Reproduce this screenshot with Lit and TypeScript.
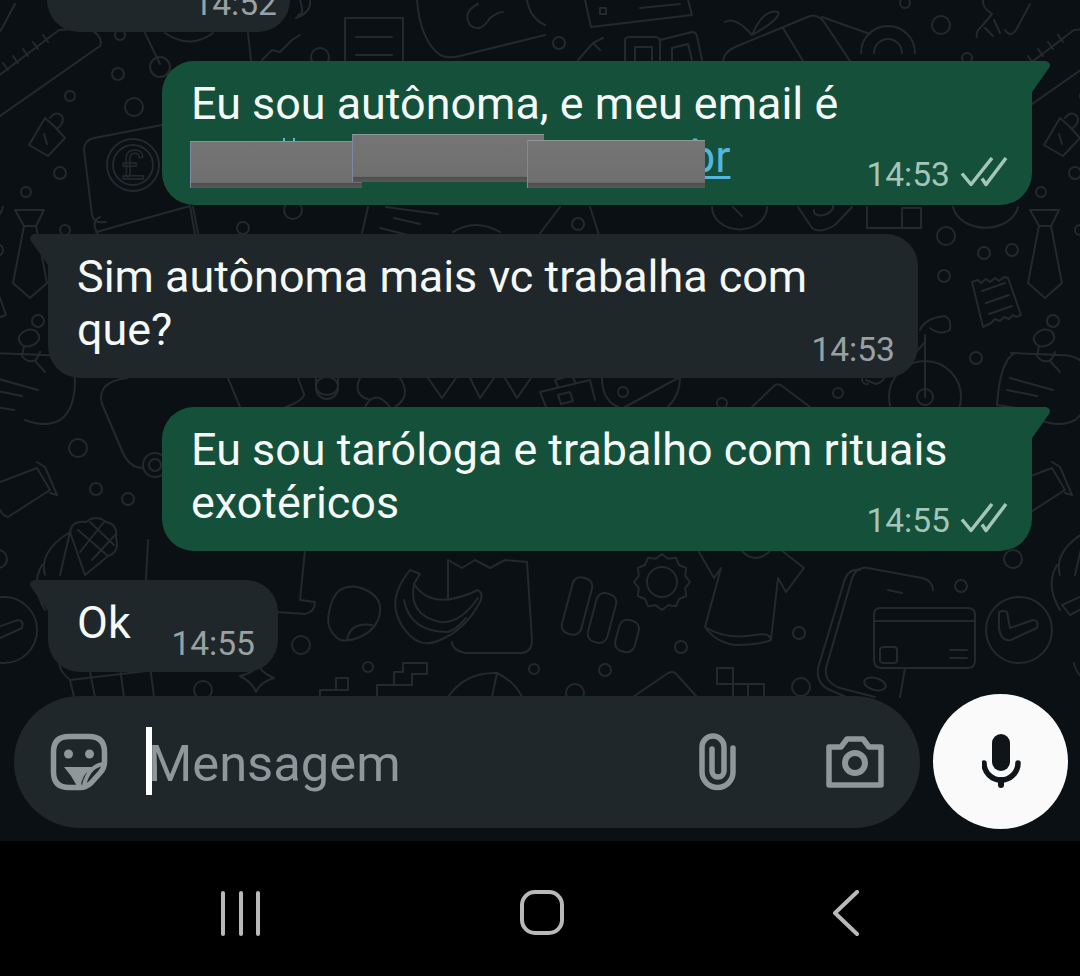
import { LitElement, html, css, svg } from "lit";
import { customElement } from "lit/decorators.js";

// Outline doodles of the chat wallpaper. The tile repeats every 1015px across.
const DOODLES = [
  // ruler
  "M-20 90L59 30M100 46L-20 130M59 30L88 28Q104 36 100 46M8 70l-5-7M18 63l-5-7M28 56l-5-7M38 49l-5-7M48 42l-5-7",
  // paint brush
  "M29 145L45 118L54 126L65 138L48 156ZM50 118q6-8 12-2q3 6-4 12M44 134l3 10",
  // payment card with coin
  "M84 150Q84 140 94 138L162 125M84 150L92 215Q94 224 106 222M96 232L190 206M190 206L196 240",
  // receipt sheet
  "M345 60V18H403V60M356 37H392M356 55H392",
  // signature card
  "M417 0Q420 40 440 55Q448 59 460 56L545 35M470 25Q462 12 478 4M470 25Q480 34 490 18Q498 12 503 12",
  "M527 0Q530 18 545 25",
  // small card and arrow
  "M585 0L591 27L692 15L688 0M600 8h6v6h-6zM640 8L680 4",
  "M578 60L593 43L600 50M593 43L603 38",
  "M625 60V40Q625 37 630 37H655Q660 37 660 42V60M635 60V47H652V60M660 40L692 32Q696 32 697 36L702 60M672 60V48L688 44L692 60",
  // gift box and target
  "M723 61Q724 52 735 47L810 16Q820 14 826 25L850 61M783 28L803 61M822 17L870 34M725 22Q735 16 752 35M752 35Q764 8 778 12Q782 18 752 35",
  "M861 53A27 27 0 1 1 915 53M874 53A14 14 0 0 1 902 53",
  // push pin
  "M977 37Q975 32 982 26L992 14Q980 6 984 -2M1000 33L994 20M1005 30Q1010 38 1016 30L1030 4M985 28l8 8",
  // ice-cream grid and star
  "M59 663Q60 672 70 680L74 697M90 672L95 697M120 668L124 697M150 665L154 697M70 680L172 668",
  "M240 676Q256 672 258 664Q260 672 274 678Q260 682 256 692Q252 682 240 676Z",
  // tie
  "M15 210H44L36 226H24ZM24 226L13 283L30 298L47 283L36 226",
  // document on the left of the second row
  "M100 217Q93 220 95 228L101 240",
  // curved frame and target
  "M127 378Q96 382 102 404L123 453Q130 468 143 468",
  "M228 378L240 407M298 378L304 394Q304 400 286 407",
  "M316 378V388A11 11 0 0 0 338 388V378",
  "M360 378Q352 395 370 400M400 378Q412 396 395 407M365 407Q375 388 390 407",
  // row of bunting
  "M428 378L442 398L456 378M470 378L480 398L494 378M505 378L517 398L531 378",
  // briefcase
  "M540 392L590 380L595 400M540 392L546 407M558 387L555 380L572 375L575 382M558 395l12-3l3 9l-12 3z",
  // globe
  "M602 378Q602 400 618 407M680 378Q680 395 668 407M625 407L678 378M618 392A5 5 0 1 0 628 392A5 5 0 1 0 618 392",
  // tent
  "M752 407L775 385Q778 383 782 386L810 407",
  // key
  "M866 380l10 4q8-2 10-10M866 374a4 4 0 0 0 2 10",
  // handlebar and wheel
  "M920 330Q925 318 945 316Q952 320 950 330Q940 336 930 328M925 335L925 397M925 342L900 370",
  // receipt
  "M972 282l6-2l3 3l5-4l4 3l5-4l4 3l5-4l4 1L1021 315l-5 2l-3-2l-4 4l-5-2l-4 4l-5-2l-4 4L983 327ZM982 291L1005 283M986 303L1009 295M989 314L1012 306",
  // pin on a satchel
  "M14 410L-18 405M0 353Q-15 360 -18 405M-4 353L45 355Q73 355 75 380Q75 410 60 420Q45 428 25 420M20 342a10 7 -20 1 1 18 -8a10 7 -20 1 1 -18 8M24 346l-2 10q6 8 14 4l4 -8M36 362l9 10M-5 378L38 390M-8 390L22 396",
  // bottle
  "M0 482L37 468L50 490L8 517Q2 515 0 510M37 462L45 467L57 495L50 493",
  // corn cob in its husk
  "M45 575Q38 552 70 532M70 532Q72 520 86 522Q96 514 106 522Q118 524 116 538Q120 552 108 556M78 530L108 556M90 522L114 545M104 522L80 552M116 534L92 560M70 532L85 575M70 532L60 575M108 556L85 575",
  // clock
  "M-16 628V612Q-12 610 -8 612L-5 628L18 620Q24 620 22 628L-4 640Q-14 642 -16 628Z",
  // sword
  "M148 540L146 580M306 540L300 600L315 602Q315 612 305 614L276 612",
  // blob
  "M340 590Q352 583 366 590Q382 598 380 612Q378 628 362 636Q350 642 340 640Q325 630 329 612Q332 596 340 590ZM347 640Q350 622 372 625",
  // banana bunch
  "M410 570L420 574L414 584Q432 612 478 590Q484 594 480 602Q465 630 440 640Q420 650 405 630Q390 610 398 590Q402 580 410 570ZM414 584Q408 615 440 622Q460 624 478 598M404 600Q410 632 448 632Q456 630 466 618",
  // paper bag
  "M448 600V560L462 568L475 560L490 568L505 560L527 562L532 640Q532 653 520 653H465Q452 650 452 642",
  // half-pie
  "M448 697Q465 672 497 673Q515 682 522 697M497 673L492 697",
  // tetris steps
  "M320 697V690H336V678H348V690H336M377 697V685H394V672H403V663H427V674H412V685H394",
  // tee shirt
  "M699 552L714 578L721 568L705 627Q725 640 755 635Q770 632 771 640Q760 645 735 645Q715 642 705 627M721 568M771 640L778 578L786 592L804 568L781 550M742 551Q755 565 770 551",
  // triangle and tetris blocks
  "M633 697L668 673Q674 670 678 676L697 697M717 668H733V684H717ZM733 684H764V697M748 684V697M733 684V697",
  // phone with card
  "M933 590Q932 580 922 578L868 568Q855 566 851 582L826 668Q824 682 840 688L875 697M860 570Q848 568 844 582L818 668Q816 684 830 690L846 697M888 590L902 593M905 668L900 697",
  "M880 608H968Q975 608 975 615V660Q975 668 968 668H882Q874 668 874 660V615Q874 608 880 608ZM874 621H975M950 650H967M950 658H967",
  "M884 647H894Q897 647 897 650V660Q897 663 894 663H884Q880 663 880 660V650Q880 647 884 647Z",
  // leaf tip
  "M42 565Q30 585 45 610M65 597L47 605L55 615L68 608",
  // row below the first bubble
  "M193 207L198 233M362 233L368 207M386 207L438 214M394 218L420 224M380 228L412 236",
  "M453 232Q475 218 500 232M560 207L535 240M590 207L600 238",
  "M712 207A27 22 0 0 0 767 207M733 207L742 216",
  "M798 207L812 228Q820 234 835 225L852 207M814 210a10 6 -20 1 0 18 -6",
  "M867 207V228H902M902 208H921V228H902Z",
  "M953 207A33 25 0 0 0 1018 207",
  // top strip
  "M145 33L160 64M165 33Q190 50 213 33M248 33L251 60M262 60L272 50L280 52L292 40L300 35",
  "M300 0Q305 15 298 15M310 0Q312 12 296 18",
];

const RINGS: [number, number, number][] = [
  [118, 74, 6], [70, 96, 5], [134, 107, 9], [160, 67, 10], [320, 57, 9], [60, 173, 6], [26, 192, 5],
  [120, 35, 5], [65, 230, 5], [243, 228, 6], [293, 210, 9], [578, 224, 6], [559, 43, 6], [941, 25, 9],
  [905, 3, 5], [967, 58, 5], [946, 236, 9], [984, 253, 6], [1012, 250, 6], [944, 276, 6], [38, 321, 6],
  [976, 358, 6], [78, 448, 9], [96, 489, 6], [128, 499, 6], [155, 465, 12], [155, 465, 6], [1013, 559, 9],
  [961, 586, 6], [799, 633, 6], [681, 647, 6], [605, 670, 6], [801, 687, 9], [575, 693, 9], [662, 582, 15],
  [301, 645, 9], [203, 690, 9], [368, 667, 5], [534, 669, 5], [838, 393, 5], [722, 403, 5], [925, 397, 36],
  [925, 397, 8], [4, 630, 33], [133, 165, 26], [133, 165, 20],
];

// Bar-chart pills: centre x, centre y, height.
const PILLS: [number, number, number][] = [
  [577, 606, 58],
  [602, 618, 50],
  [627, 636, 32],
];

// Toothed outline of the gear drawn around its ring.
const gearPath = (cx: number, cy: number): string => {
  const teeth = 12;
  let d = "";
  for (let i = 0; i < teeth * 2; i++) {
    const r = i % 2 ? 24 : 28;
    const a = (i / (teeth * 2)) * Math.PI * 2;
    d += `${i ? "L" : "M"}${(cx + r * Math.cos(a)).toFixed(1)} ${(cy + r * Math.sin(a)).toFixed(1)}`;
  }
  return d + "Z";
};

const wallpaperGroup = svg`
  <g id="tile">
    ${DOODLES.map((d) => svg`<path d=${d}></path>`)}
    ${RINGS.map(([cx, cy, r]) => svg`<circle cx=${cx} cy=${cy} r=${r}></circle>`)}
    ${PILLS.map(
      ([cx, cy, h]) =>
        svg`<rect x=${cx - 10} y=${cy - h / 2} width="20" height=${h} rx="8" transform="rotate(15 ${cx} ${cy})"></rect>`
    )}
    <path d=${gearPath(662, 582)}></path>
    <ellipse cx="875" cy="684" rx="11" ry="6" transform="rotate(15 875 684)"></ellipse>
    <ellipse cx="327" cy="386" rx="11" ry="9"></ellipse>
  </g>
`;

const doubleTick = html`
  <svg class="ticks" width="48" height="30" viewBox="0 0 48 30" aria-hidden="true">
    <path d="M2 16.500L11 27.500L32 1M22 21.500L26 27.500L46 1"></path>
  </svg>
`;

@customElement("app-root")
export class AppRoot extends LitElement {
  static styles = css`
    :host {
      display: block;
      width: 1080px;
      height: 976px;
      font-family: Roboto, "Noto Sans", sans-serif;
    }
    .screen {
      width: 1080px;
      height: 976px;
      display: flex;
      flex-direction: column;
      background: #0b1014;
      position: relative;
      overflow: hidden;
    }
    .wallpaper {
      position: absolute;
      left: 0;
      top: 0;
      fill: none;
      stroke: #24292d;
      stroke-width: 2;
      stroke-linecap: round;
      stroke-linejoin: round;
    }
    .chat {
      position: relative;
      flex: 1;
      min-height: 0;
      display: flex;
      flex-direction: column;
      justify-content: flex-end;
      gap: 29px;
      overflow: hidden;
      padding: 0 48px 22px;
    }
    .bubble {
      position: relative;
      flex: none;
      box-sizing: border-box;
      width: 870px;
      height: 144px;
      display: grid;
      font-size: 44.900px;
      line-height: 53px;
      color: #f4f8f7;
      white-space: nowrap;
    }
    .bubble > .text,
    .bubble > .meta {
      grid-area: 1 / 1;
    }
    .in {
      align-self: flex-start;
      background: #1f272a;
      border-radius: 0 32px 32px 32px;
      padding: 16px 23px 9px 29px;
    }
    .out {
      align-self: flex-end;
      margin-left: 114px;
      background: #15503a;
      border-radius: 32px 0 32px 32px;
      padding: 16px 24px 11px 29px;
    }
    .tail {
      position: absolute;
      top: 0;
      width: 22px;
      height: 34px;
    }
    .in .tail {
      left: -20px;
      fill: #1f272a;
    }
    .out .tail {
      right: -20px;
      fill: #15503a;
    }
    .short {
      width: 230px;
      height: 92px;
      display: flex;
      align-items: flex-end;
      justify-content: space-between;
      padding: 16px 23px 9px 29px;
    }
    .short .text {
      align-self: flex-start;
    }
    .first {
      width: 243px;
      margin-left: -1px;
      border-radius: 32px;
      justify-content: flex-end;
      padding-right: 13px;
    }
    .meta {
      justify-self: end;
      align-self: end;
      display: flex;
      align-items: center;
      gap: 10px;
      font-size: 33.600px;
      line-height: 38px;
      color: #9aa1a4;
    }
    .out .meta {
      color: #a3c6b8;
    }
    .ticks {
      fill: none;
      stroke: #a3c6b8;
      stroke-width: 3.500;
      stroke-linejoin: round;
      margin-top: -6px;
    }
    .link {
      display: block;
      padding-left: 499px;
      color: #53b6de;
      text-decoration: none;
    }
    .link span {
      text-decoration: underline;
      text-decoration-thickness: 3px;
      text-underline-offset: 4px;
    }
    .stub {
      position: absolute;
      top: 77px;
      width: 2px;
      height: 4px;
      background: #53b6de;
    }
    .redact {
      position: absolute;
      box-sizing: border-box;
      background: linear-gradient(#767575, #6f6f6f 88%, #4e4e4e 90%, #585858);
      border-top: 1px solid #8b9a97;
      border-left: 1px solid #7f87a3;
    }
    .composer {
      position: relative;
      flex: none;
      display: flex;
      align-items: center;
      gap: 13px;
      padding: 0 12px 12px 14px;
    }
    .field {
      flex: 1;
      height: 132px;
      box-sizing: border-box;
      background: #1f272a;
      border-radius: 66px;
      display: flex;
      align-items: center;
      padding: 0 36px 0 36px;
      color: #8f979b;
      font-size: 50.700px;
    }
    .field svg {
      flex: none;
      fill: none;
      stroke: #8f979b;
    }
    .caret {
      width: 6px;
      height: 68px;
      background: #ffffff;
      margin: 0 -4px 2px 38px;
      flex: none;
    }
    .placeholder {
      flex: 1;
      margin-top: 4px;
    }
    .clip {
      margin-right: 89px;
    }
    .mic {
      flex: none;
      width: 135px;
      height: 135px;
      border-radius: 50%;
      background: #fafafa;
      display: flex;
      align-items: center;
      justify-content: center;
    }
    .mic svg {
      margin-left: 2px;
    }
    .nav {
      position: relative;
      flex: none;
      height: 135px;
      background: #000000;
      display: flex;
      justify-content: space-between;
      align-items: flex-start;
      padding: 49px 220px 0 220px;
      box-sizing: border-box;
    }
    .nav svg {
      fill: none;
      stroke: #b9b9b9;
      stroke-width: 4;
      stroke-linecap: round;
      stroke-linejoin: round;
    }
    .home {
      margin-left: -12px;
    }
    .back {
      margin-right: -2px;
    }
  `;

  render() {
    return html`
      <div class="screen">
        <svg class="wallpaper" width="1080" height="841" viewBox="0 0 1080 841" aria-hidden="true">
          ${wallpaperGroup}
          <use href="#tile" x="1015"></use>
          <use href="#tile" x="-1015"></use>
          <text x="133" y="179" text-anchor="middle" font-size="40" fill="none" stroke="#24292d" stroke-width="1.500">£</text>
        </svg>

        <div class="chat">
          <div class="bubble in short first">
            <div class="meta">14:52</div>
          </div>

          <div class="bubble out">
            <svg class="tail" viewBox="0 0 22 34"><path d="M0 0H16Q22 2 19 7L0 34Z"></path></svg>
            <div class="text">
              Eu sou autônoma, e meu email é
              <a class="link"><span>br</span></a>
            </div>
            <div class="meta">14:53 ${doubleTick}</div>
            <i class="stub" style="left:121px"></i>
            <i class="stub" style="left:131px"></i>
            <i class="redact" style="left:28px;top:80px;width:172px;height:47px"></i>
            <i class="redact" style="left:190px;top:73px;width:192px;height:48px"></i>
            <i class="redact" style="left:365px;top:79px;width:178px;height:48px"></i>
          </div>

          <div class="bubble in">
            <svg class="tail" viewBox="0 0 22 34"><path d="M22 0H6Q0 2 3 7L22 34Z"></path></svg>
            <div class="text">Sim autônoma mais vc trabalha com<br />que?</div>
            <div class="meta">14:53</div>
          </div>

          <div class="bubble out">
            <svg class="tail" viewBox="0 0 22 34"><path d="M0 0H16Q22 2 19 7L0 34Z"></path></svg>
            <div class="text">Eu sou taróloga e trabalho com rituais<br />exotéricos</div>
            <div class="meta">14:55 ${doubleTick}</div>
          </div>

          <div class="bubble in short">
            <svg class="tail" viewBox="0 0 22 34"><path d="M22 0H6Q0 2 3 7L22 34Z"></path></svg>
            <div class="text">Ok</div>
            <div class="meta">14:55</div>
          </div>
        </div>

        <div class="composer">
          <div class="field">
            <svg width="58" height="58" viewBox="0 0 58 58" stroke-width="5.500" stroke-linejoin="round">
              <path d="M19 3.500H39Q54.500 3.500 54.500 19V29Q54.500 35 50 40L41 50Q36 54.500 30 54.500H19Q3.500 54.500 3.500 39V19Q3.500 3.500 19 3.500Z"></path>
              <circle cx="18.500" cy="21" r="4.500" fill="#8f979b" stroke="none"></circle>
              <circle cx="39.500" cy="21" r="4.500" fill="#8f979b" stroke="none"></circle>
              <path d="M14 34H47Q37 37 33.500 44Q31 49 31 53H27Q22 43 14 34Z" fill="#8f979b" stroke="none"></path>
              <path d="M53 31Q39 33 34 52" stroke-width="4"></path>
            </svg>
            <div class="caret"></div>
            <div class="placeholder">Mensagem</div>
            <svg class="clip" width="38" height="58" viewBox="0 0 38 58" stroke-width="5.500" stroke-linecap="round">
              <path d="M34 15V39A15.500 15.500 0 0 1 3 39V14A11 11 0 0 1 25 14V38A6 6 0 0 1 13 38V16"></path>
            </svg>
            <svg width="58" height="52" viewBox="0 0 58 52" stroke-width="5.500" stroke-linejoin="round">
              <path d="M3 11H15L21 3H37L43 11H55V49H3Z"></path>
              <circle cx="29" cy="27" r="10" stroke-width="6"></circle>
            </svg>
          </div>
          <div class="mic">
            <svg width="40" height="56" viewBox="0 0 40 56">
              <rect x="10" y="0" width="18" height="37" rx="9" fill="#10151a"></rect>
              <path d="M2 29A17 17 0 0 0 36 29" fill="none" stroke="#10151a" stroke-width="5.500" stroke-linecap="round"></path>
              <path d="M19 46V51" stroke="#10151a" stroke-width="6" stroke-linecap="round"></path>
            </svg>
          </div>
        </div>

        <div class="nav">
          <svg width="44" height="48" viewBox="0 0 44 48">
            <path d="M3 3V44M21 3V44M38 3V44"></path>
          </svg>
          <svg class="home" width="44" height="48" viewBox="0 0 44 48">
            <rect x="2" y="2" width="40" height="41" rx="13"></rect>
          </svg>
          <svg class="back" width="30" height="48" viewBox="0 0 30 48">
            <path d="M25 2L3 23L25 44"></path>
          </svg>
        </div>
      </div>
    `;
  }
}
